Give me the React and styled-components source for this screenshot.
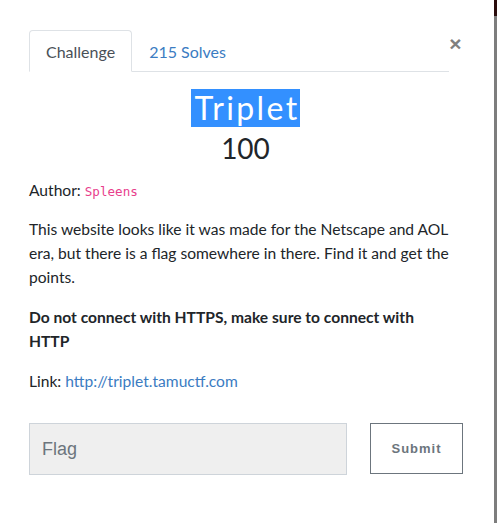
import React from 'react'
import styled, { createGlobalStyle } from 'styled-components';

const GlobalStyle = createGlobalStyle`
  html, body {
    margin: 0;
    padding: 0;
    background: #fff;
  }
  body {
    font-family: Lato, "Liberation Sans", sans-serif;
    color: #212529;
  }
  * {
    box-sizing: border-box;
  }
`;

export default function App() {
  return (
    <>
      <GlobalStyle />
      <Page>
        <Modal>
          <Header>
            <Tabs>
              <Tab active>Challenge</Tab>
              <Tab>215 Solves</Tab>
            </Tabs>
            <Close aria-label="Close">×</Close>
          </Header>

          <Title><Selected>Triplet</Selected></Title>
          <Value>100</Value>

          <Author>Author: <Code>Spleens</Code></Author>
          <Text>
            This website looks like it was made for the Netscape and AOL era, but there is a flag
            somewhere in there. Find it and get the points.
          </Text>
          <Text><strong>Do not connect with HTTPS, make sure to connect with HTTP</strong></Text>
          <Text>Link: <Link href="#">http://triplet.tamuctf.com</Link></Text>

          <Form onSubmit={e => e.preventDefault()}>
            <FlagInput placeholder="Flag" />
            <SubmitButton type="submit">Submit</SubmitButton>
          </Form>
        </Modal>
        <Scrollbar />
      </Page>
    </>
  )
}

const Page = styled.div`
  display: flex;
  justify-content: space-between;
  width: 498px;
  height: 523px;
  overflow: hidden;
`;

const Modal = styled.div`
  width: 462px;
  padding: 30px 0 0 29px;
`;

const Scrollbar = styled.div`
  width: 3px;
  margin-right: 1px;
  height: 100%;
  background: linear-gradient(to bottom, #2a0c0c 0, #2a0c0c 16px, #7d7d7d 16px, #7d7d7d 100%);
`;

const Header = styled.div`
  display: flex;
  align-items: flex-start;
`;

const Tabs = styled.div`
  display: flex;
  flex: 0 0 420px;
  border-bottom: 1px solid #dee2e6;
`;

const Tab = styled.a`
  display: block;
  padding: 0 16px;
  height: 42px;
  line-height: 41px;
  margin-bottom: -1px;
  font-size: 16px;
  text-decoration: none;
  color: ${p => (p.active ? '#495057' : '#3b7cc2')};
  background: ${p => (p.active ? '#fff' : 'transparent')};
  border: 1px solid ${p => (p.active ? '#dee2e6' : 'transparent')};
  border-bottom-color: ${p => (p.active ? '#fff' : 'transparent')};
  border-radius: 4px 4px 0 0;
`;

const Close = styled.button`
  flex: 0 0 13px;
  margin: 2px 0 0;
  padding: 0;
  border: 0;
  background: none;
  text-align: center;
  font-family: "Liberation Sans", Arial, sans-serif;
  font-size: 21px;
  font-weight: 700;
  line-height: 24px;
  color: #808080;
  cursor: pointer;
`;

const Title = styled.h2`
  margin: 17px 0 0;
  text-align: center;
  font-family: Lato, "Liberation Sans", sans-serif;
  font-size: 32px;
  font-weight: 400;
  line-height: 38px;
`;

const Selected = styled.span`
  display: inline-block;
  background: #3390ff;
  color: #fff;
  letter-spacing: 2.4px;
  padding: 0 0 0 3px;
`;

const Value = styled.h3`
  margin: 4px 0 13px;
  text-align: center;
  font-size: 28px;
  font-weight: 400;
  line-height: 34px;
`;

const Text = styled.p`
  max-width: 428px;
  margin: 0 0 16px;
  font-size: 15.6px;
  line-height: 24px;

  strong {
    font-weight: 700;
  }
`;

const Author = styled(Text)`
  margin-bottom: 13px;
`;

const Code = styled.code`
  font-family: "DejaVu Sans Mono", "Liberation Mono", monospace;
  font-size: 12.6px;
  color: #e83e8c;
`;

const Link = styled.a`
  color: #3b7cc2;
  text-decoration: none;
`;

const Form = styled.form`
  display: flex;
  align-items: flex-start;
  justify-content: space-between;
  margin-top: 30px;
`;

const FlagInput = styled.input`
  width: 318px;
  height: 52px;
  padding: 0 12px;
  background: #efefef;
  border: 1px solid #ced4da;
  border-radius: 0;
  font-family: "Liberation Sans", Arial, sans-serif;
  font-size: 18px;
  color: #495057;
  outline: none;

  &::placeholder {
    color: #6c757d;
  }
`;

const SubmitButton = styled.button`
  margin-right: -1px;
  width: 93px;
  height: 51px;
  background: #fff;
  border: 1px solid #6c757d;
  border-radius: 0;
  font-family: "Liberation Sans", Arial, sans-serif;
  font-size: 13px;
  font-weight: 700;
  letter-spacing: 1px;
  color: #6c757d;
  cursor: pointer;
`;
